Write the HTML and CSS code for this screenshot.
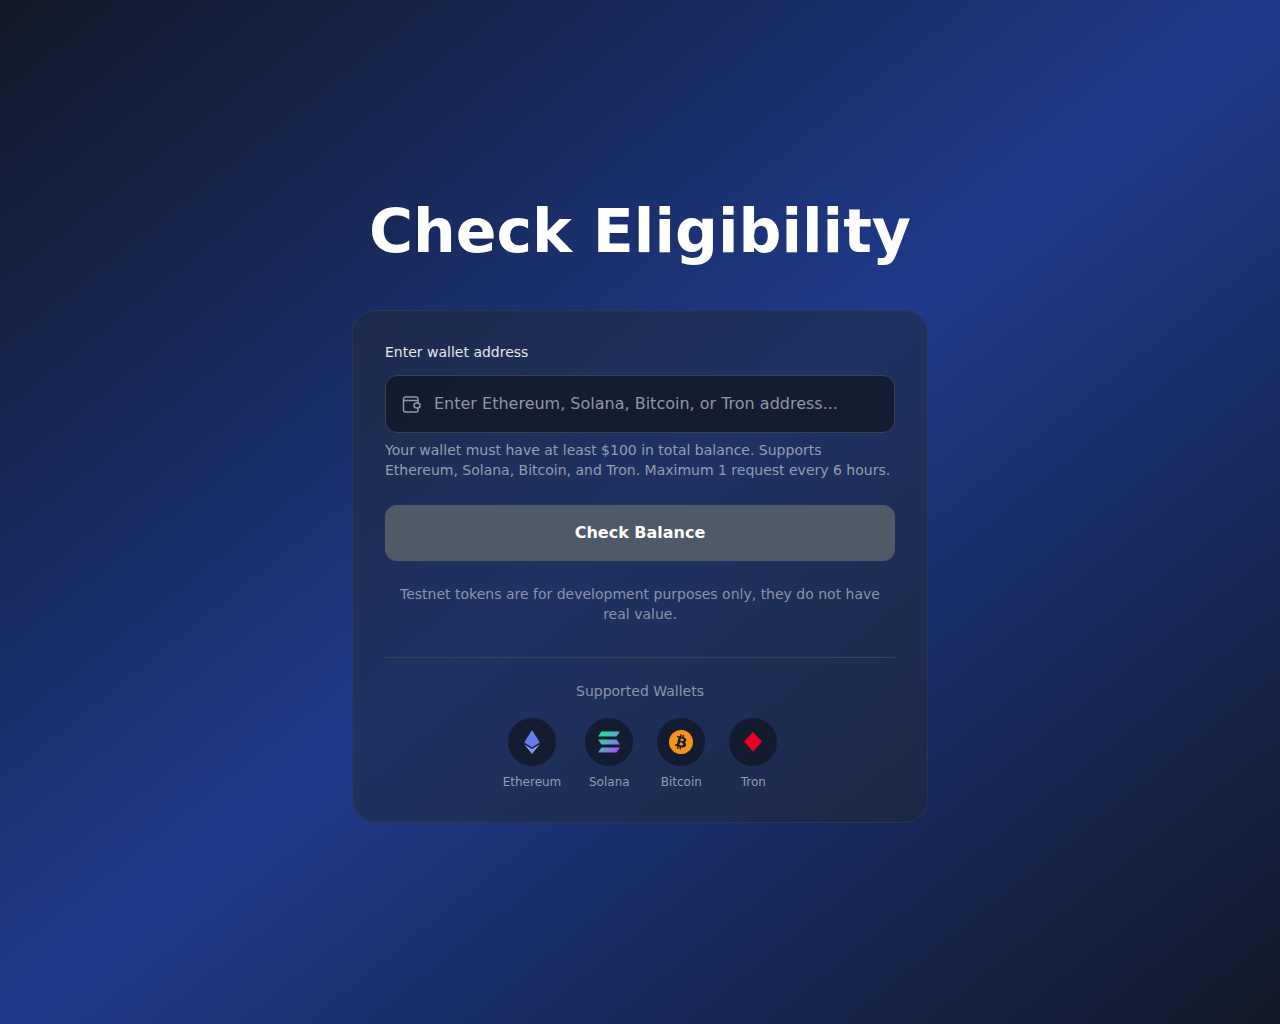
FILE: index.html
```html
<!DOCTYPE html>
<html lang="en">
<head>
    <meta charset="UTF-8">
    <meta name="viewport" content="width=device-width, initial-scale=1.0">
    <title>Check Eligibility</title>
    <link rel="stylesheet" href="styles.css">
</head>

<body>
    <main class="page">
        <h1 class="title">Check Eligibility</h1>

        <section class="card">
            <label class="field-label" for="wallet">Enter wallet address</label>
            <div class="input-box">
                <svg class="input-icon" width="20" height="20" viewBox="0 0 20 20" fill="none" stroke="currentColor" stroke-width="1.5" stroke-linecap="round" stroke-linejoin="round">
                    <path d="M16 9V5a2 2 0 0 0-2-2H3.500a2 2 0 0 0-2 2v11a2 2 0 0 0 2 2H14a2 2 0 0 0 2-2v-2"/>
                    <path d="M1.500 6.500H16"/>
                    <rect x="12" y="9" width="6" height="5" rx="2.500"/>
                </svg>
                <input id="wallet" class="input" type="text" placeholder="Enter Ethereum, Solana, Bitcoin, or Tron address...">
            </div>
            <p class="help">Your wallet must have at least $100 in total balance. Supports Ethereum, Solana, Bitcoin, and Tron. Maximum 1 request every 6 hours.</p>

            <button class="submit" type="button">Check Balance</button>

            <p class="note">Testnet tokens are for development purposes only, they do not have real value.</p>

            <div class="wallets">
                <p class="wallets-title">Supported Wallets</p>
                <ul class="wallet-list">
                    <li class="wallet">
                        <span class="wallet-icon">
                            <svg width="24" height="24" viewBox="0 0 24 24">
                                <path fill="#627eea" d="M12 0 4.200 12.600 12 17.400l7.800-4.800z"/>
                                <path fill="#8196ef" d="M12 19 4.200 14.200 12 24l7.800-9.800z"/>
                            </svg>
                        </span>
                        <span class="wallet-name">Ethereum</span>
                    </li>
                    <li class="wallet">
                        <span class="wallet-icon">
                            <svg width="24" height="24" viewBox="0 0 24 24">
                                <defs>
                                    <linearGradient id="sol" x1="0" y1="0" x2="1" y2="1">
                                        <stop offset="0" stop-color="#14f195"/>
                                        <stop offset="0.5" stop-color="#5aa6c8"/>
                                        <stop offset="1" stop-color="#b23ff5"/>
                                    </linearGradient>
                                </defs>
                                <path fill="url(#sol)" d="M4.500 1.500H23l-3.500 5H1zM1 9.500h18.500l3.500 5H4.500zM4.500 17.500H23l-3.500 5H1z"/>
                            </svg>
                        </span>
                        <span class="wallet-name">Solana</span>
                    </li>
                    <li class="wallet">
                        <span class="wallet-icon">
                            <svg width="24" height="24" viewBox="0 0 24 24">
                                <path fill="#f7931a" d="M23.638 14.904c-1.602 6.430-8.113 10.340-14.542 8.736C2.670 22.050-1.244 15.525.362 9.105 1.962 2.670 8.475-1.243 14.900.358c6.430 1.605 10.342 8.115 8.738 14.548v-.002zm-6.350-4.613c.240-1.590-.974-2.450-2.640-3.030l.540-2.153-1.315-.330-.525 2.107c-.345-.087-.705-.167-1.064-.250l.526-2.127-1.320-.330-.540 2.165c-.285-.067-.565-.132-.840-.200l-1.815-.450-.350 1.407s.975.225.955.236c.535.136.630.486.615.766l-1.477 5.920c-.075.166-.240.406-.614.314.015.020-.960-.240-.960-.240l-.660 1.510 1.710.426.930.242-.540 2.190 1.320.327.540-2.170c.360.100.705.190 1.050.273l-.510 2.154 1.320.330.545-2.190c2.240.427 3.930.257 4.640-1.774.570-1.637-.030-2.580-1.217-3.196.854-.193 1.500-.760 1.680-1.930h.010zm-3.010 4.220c-.404 1.640-3.157.750-4.050.530l.720-2.900c.896.230 3.757.670 3.330 2.370zm.410-4.240c-.370 1.490-2.662.735-3.405.550l.654-2.640c.744.180 3.137.524 2.750 2.084v.006z"/>
                            </svg>
                        </span>
                        <span class="wallet-name">Bitcoin</span>
                    </li>
                    <li class="wallet">
                        <span class="wallet-icon">
                            <svg width="24" height="24" viewBox="0 0 24 24">
                                <path fill="#eb0029" d="M12 2 21 11.500 12 21.500 3 11.500z"/>
                            </svg>
                        </span>
                        <span class="wallet-name">Tron</span>
                    </li>
                </ul>
            </div>
        </section>
    </main>
</body>
</html>
```

FILE: styles.css
```css
* {
    margin: 0;
    padding: 0;
    box-sizing: border-box;
}

body {
    min-height: 100vh;
    background: linear-gradient(to bottom right, #111827 0%, #1e3a8a 50%, #111827 100%);
    font-family: "DejaVu Sans", sans-serif;
    color: #fff;
}

.page {
    min-height: 100vh;
    display: flex;
    flex-direction: column;
    align-items: center;
    justify-content: center;
}

.title {
    font-size: 60px;
    line-height: 60px;
    font-weight: 700;
    margin-bottom: 49px;
}

.card {
    width: 576px;
    padding: 31px 32px 32px;
    display: flex;
    flex-direction: column;
    background: rgba(31, 41, 55, 0.5);
    border: 1px solid rgba(55, 65, 81, 0.5);
    border-radius: 24px;
}

.field-label {
    font-size: 14px;
    line-height: 20px;
    font-weight: 500;
    color: #e5e7eb;
    margin-bottom: 13px;
}

.input-box {
    height: 58px;
    display: flex;
    align-items: center;
    gap: 12px;
    padding: 0 16px;
    background: rgba(17, 24, 39, 0.8);
    border: 1px solid #374151;
    border-radius: 12px;
}

.input-icon {
    flex-shrink: 0;
    color: #8f97a6;
}

.input {
    flex: 1;
    min-width: 0;
    padding-bottom: 2px;
    background: none;
    border: 0;
    outline: 0;
    font-family: inherit;
    font-size: 16px;
    color: #fff;
}

.input::placeholder {
    color: #8f97a6;
    opacity: 1;
}

.help {
    margin-top: 7px;
    font-size: 14px;
    line-height: 20px;
    color: #949eb2;
}

.submit {
    height: 56px;
    margin-top: 25px;
    padding-bottom: 2px;
    border: 0;
    border-radius: 12px;
    background: #4e5a67;
    font-family: inherit;
    font-size: 16px;
    font-weight: 700;
    color: #fff;
}

.note {
    margin-top: 23px;
    padding: 0 8px;
    font-size: 14px;
    line-height: 20px;
    text-align: center;
    color: #8a94a8;
}

.wallets {
    margin-top: 33px;
    padding-top: 23px;
    border-top: 1px solid #374151;
}

.wallets-title {
    font-size: 14px;
    line-height: 20px;
    text-align: center;
    color: #8a94a8;
    margin-bottom: 17px;
}

.wallet-list {
    display: flex;
    justify-content: center;
    gap: 24px;
    list-style: none;
}

.wallet {
    display: flex;
    flex-direction: column;
    align-items: center;
    gap: 8px;
}

.wallet-icon {
    width: 48px;
    height: 48px;
    display: flex;
    align-items: center;
    justify-content: center;
    border-radius: 50%;
    background: rgba(17, 24, 39, 0.8);
}

.wallet-name {
    font-size: 12px;
    line-height: 16px;
    color: #949eb2;
}
```
